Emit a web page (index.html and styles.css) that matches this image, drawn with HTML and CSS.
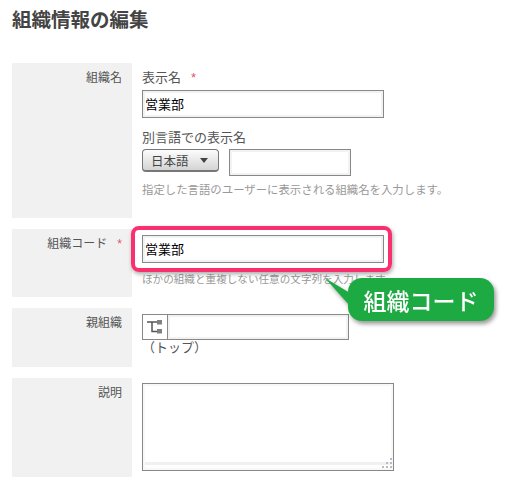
FILE: index.html
```html
<!DOCTYPE html>
<html lang="ja">
<head>
    <meta charset="UTF-8">
    <title>組織情報の編集</title>
    <link rel="stylesheet" href="styles.css">
</head>
<body>
    <div class="page">
        <h1 class="page-title">組織情報の編集</h1>

        <div class="form-row row-name">
            <div class="form-label">組織名</div>
            <div class="form-field">
                <div class="field-title">表示名<span class="required">*</span></div>
                <input class="text-input input-wide" type="text" value="営業部">
                <div class="field-title field-title-sub">別言語での表示名</div>
                <div class="lang-line">
                    <button class="lang-button" type="button">日本語<span class="lang-arrow"></span></button>
                    <input class="text-input input-lang" type="text">
                </div>
                <div class="field-hint hint-name">指定した言語のユーザーに表示される組織名を入力します。</div>
            </div>
        </div>

        <div class="form-row row-code">
            <div class="form-label">組織コード<span class="required">*</span></div>
            <div class="form-field field-code">
                <input class="text-input input-wide" type="text" value="営業部">
                <div class="field-hint">ほかの組織と重複しない任意の文字列を入力します。</div>
            </div>
        </div>

        <div class="form-row row-parent">
            <div class="form-label">親組織</div>
            <div class="form-field field-parent">
                <div class="parent-picker">
                    <span class="parent-icon">
                        <svg width="15" height="14" viewBox="0 0 15 14">
                            <path d="M0 2H10M5 2V11.5H10" fill="none" stroke="#555" stroke-width="1.5"/>
                            <rect x="10" y="0" width="5" height="4.5" fill="#808080"/>
                            <rect x="10" y="9" width="5" height="4.5" fill="#808080"/>
                        </svg>
                    </span>
                    <input class="parent-input" type="text">
                </div>
                <div class="parent-value">（トップ）</div>
            </div>
        </div>

        <div class="form-row row-desc">
            <div class="form-label">説明</div>
            <div class="form-field field-desc">
                <div class="desc-box">
                    <svg class="resize-grip" width="10" height="10" viewBox="0 0 10 10">
                        <rect x="8" y="0" width="2" height="2" fill="#b4bcc6"/>
                        <rect x="4" y="4" width="2" height="2" fill="#b4bcc6"/>
                        <rect x="8" y="4" width="2" height="2" fill="#b4bcc6"/>
                        <rect x="0" y="8" width="2" height="2" fill="#b4bcc6"/>
                        <rect x="4" y="8" width="2" height="2" fill="#b4bcc6"/>
                        <rect x="8" y="8" width="2" height="2" fill="#b4bcc6"/>
                    </svg>
                </div>
            </div>
        </div>

        <div class="highlight"></div>
        <div class="callout">
            <svg class="callout-tail" width="25" height="30" viewBox="0 0 25 30">
                <path d="M0 0L25 15V28Z" fill="#1eaa43"/>
            </svg>
            <span class="callout-text">組織コード</span>
        </div>
    </div>
</body>
</html>
```

FILE: styles.css
```css
* {
    box-sizing: border-box;
}

body {
    margin: 0;
    font-family: "Liberation Sans", "Noto Sans CJK JP", sans-serif;
    font-size: 12px;
    color: #555;
    background: white;
}

.page {
    position: relative;
    width: 513px;
    height: 492px;
    padding: 9px 12px 0;
    overflow: hidden;
}

.page-title {
    margin: 0 0 31px;
    height: 23px;
    font-size: 19.5px;
    line-height: 23px;
    color: #444;
}

.form-row {
    display: flex;
    margin-bottom: 11px;
}

.row-name { height: 155px; }
.row-code { height: 68px; }
.row-parent { height: 59px; }
.row-desc { height: 99px; }

.form-label {
    width: 120px;
    flex-shrink: 0;
    padding: 7px 10px 0 0;
    text-align: right;
    line-height: 17px;
    background: #f1f1f1;
}

.form-field {
    padding: 6px 0 0 10px;
}

.field-title {
    line-height: 17px;
    font-size: 13px;
    margin-bottom: 4px;
}

.field-title-sub {
    margin-top: 11px;
    margin-bottom: 3px;
}

.required {
    margin-left: 10px;
    color: #e0566a;
}

.text-input {
    display: block;
    height: 28px;
    padding: 0 2px 2px;
    border: 1px solid #888;
    box-shadow: inset 0 0 0 2px #f2f2f2;
    font-family: inherit;
    font-size: 13px;
    color: black;
    background: white;
}

.input-wide {
    width: 242px;
}

.lang-line {
    display: flex;
    gap: 10px;
}

.lang-button {
    display: flex;
    align-items: center;
    width: 77px;
    height: 23px;
    padding: 0 0 0 8px;
    border: 1px solid #777;
    border-bottom-width: 2px;
    border-radius: 4px;
    font-family: inherit;
    font-size: 12.5px;
    color: #444;
    background: linear-gradient(#fdfdfd, #d4d4d4);
}

.lang-arrow {
    margin-left: 11px;
    border-left: 4px solid transparent;
    border-right: 4px solid transparent;
    border-top: 5px solid #444;
}

.input-lang {
    width: 122px;
    height: 27px;
}

.field-hint {
    margin-top: 8px;
    line-height: 17px;
    font-size: 10.6px;
    color: #999;
}

.hint-name {
    margin-top: 6px;
    font-size: 11.4px;
}

.field-parent {
    padding-top: 6px;
}

.parent-picker {
    display: flex;
    width: 207px;
    height: 26px;
    border: 1px solid #888;
}

.parent-icon {
    display: flex;
    align-items: center;
    justify-content: center;
    width: 25px;
    border-right: 1px solid #888;
}

.parent-input {
    flex-grow: 1;
    min-width: 0;
    border: none;
    box-shadow: inset 0 0 0 2px #f2f2f2;
}

.parent-value {
    line-height: 16px;
    font-size: 13px;
}

.field-desc {
    padding-top: 5px;
}

.desc-box {
    position: relative;
    width: 252px;
    height: 88px;
    border: 1px solid #888;
    box-shadow: inset 0 0 0 2px #f8f8f8;
    background:
        linear-gradient(#f0f0f0, #f0f0f0) left bottom 5px / 100% 3px no-repeat,
        linear-gradient(#f0f0f0, #f0f0f0) right top / 2px 100% no-repeat;
}

.resize-grip {
    position: absolute;
    right: 1px;
    bottom: 2px;
}

.highlight {
    position: absolute;
    left: 131px;
    top: 226px;
    width: 261px;
    height: 46px;
    border: 4px solid #f9306d;
    border-radius: 8px;
    box-shadow: 1px 2px 4px rgba(0, 0, 0, 0.35);
}

.callout {
    position: absolute;
    left: 348px;
    top: 278px;
    display: flex;
    align-items: center;
    justify-content: center;
    width: 146px;
    height: 43px;
    border-radius: 14px;
    font-size: 23px;
    font-weight: 500;
    color: white;
    background: #1eaa43;
    filter: drop-shadow(2px 3px 2px rgba(0, 0, 0, 0.4));
}

.callout-tail {
    position: absolute;
    left: -23px;
    top: 0;
    overflow: visible;
}

.callout-text {
    position: relative;
}
```
